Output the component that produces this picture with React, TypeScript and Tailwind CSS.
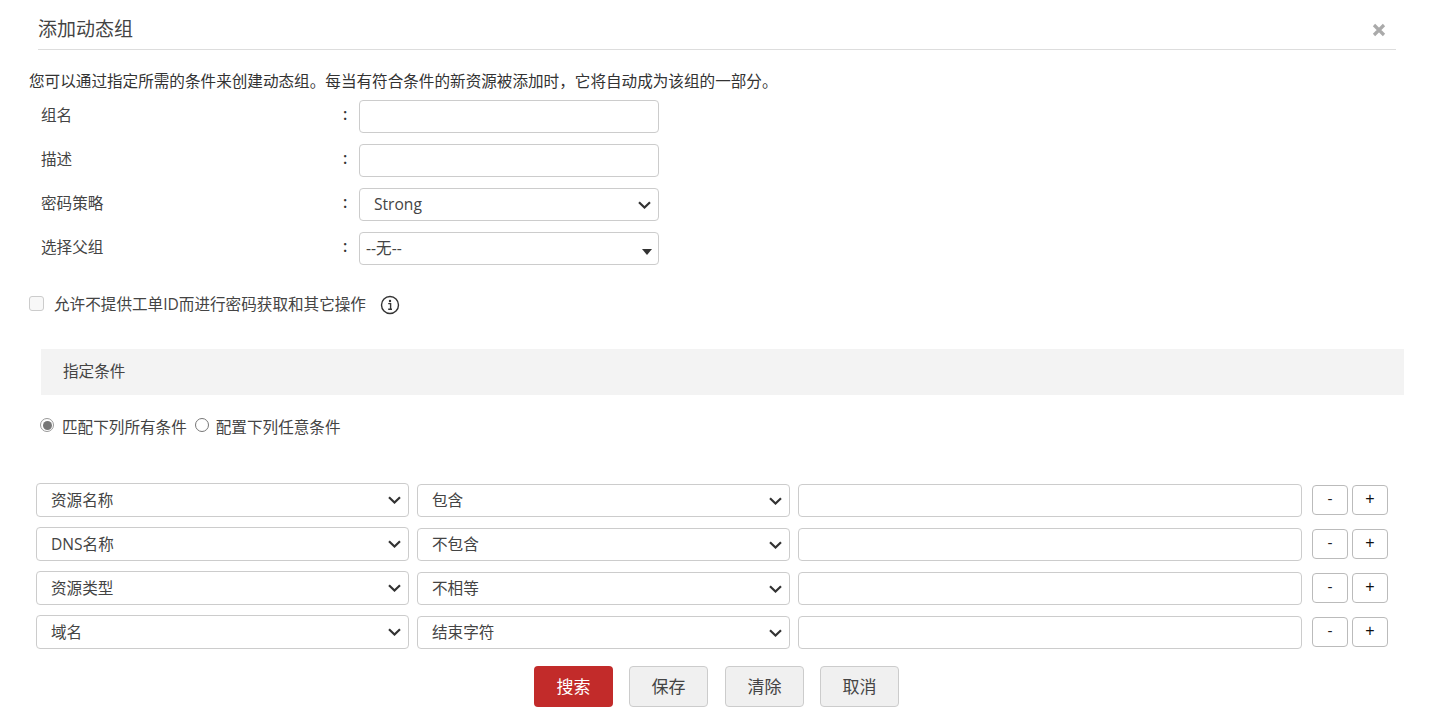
import React from 'react';

const fontStack = "font-['Open_Sans','Noto_Sans_CJK_SC',sans-serif]";

const Chevron: React.FC = () => (
  <svg className="pointer-events-none absolute right-[8px] top-1/2 -translate-y-1/2" width="13" height="8" viewBox="0 0 13 8" fill="none">
    <path d="M1 1.2 L6.5 6.5 L12 1.2" stroke="#333" strokeWidth="2.2" />
  </svg>
);

const SelectBox: React.FC<{ value: string; className: string; selectClass?: string }> = ({ value, className, selectClass }) => (
  <div className={`relative ${className}`}>
    <select
      defaultValue={value}
      className={`h-full w-full appearance-none rounded-[4px] border border-[#ccc] bg-white pl-[14px] pr-8 text-[15.6px] text-[#444] outline-none ${selectClass ?? ''}`}
    >
      <option>{value}</option>
    </select>
    <Chevron />
  </div>
);

const FormRow: React.FC<{ label: string; children: React.ReactNode }> = ({ label, children }) => (
  <div className="flex h-[33px] items-center text-[15.6px] text-[#444]">
    <span className="w-[302px] -translate-y-px">{label}</span>
    <span className="w-[16px] -translate-y-[2px] font-semibold text-[#333]">:</span>
    {children}
  </div>
);

const conditions = [
  { field: '资源名称', op: '包含' },
  { field: 'DNS名称', op: '不包含' },
  { field: '资源类型', op: '不相等' },
  { field: '域名', op: '结束字符' },
];

const App: React.FC = () => {
  return (
    <div className={`h-[726px] w-[1435px] overflow-hidden bg-white ${fontStack}`}>
      <div className="ml-[38px] mr-[39px] flex h-[50px] items-center justify-between border-b border-[#ddd] pt-[10px]">
        <h4 className="text-[19px] font-normal text-[#444]">添加动态组</h4>
        <svg className="mr-[10px]" width="14" height="14" viewBox="0 0 14 14">
          <path d="M2 2 L12 12 M12 2 L2 12" stroke="#aaa" strokeWidth="3.2" />
        </svg>
      </div>

      <p className="ml-[29px] mt-[21px] h-5 text-[15.6px] leading-5 text-[#333]">
        您可以通过指定所需的条件来创建动态组。每当有符合条件的新资源被添加时，它将自动成为该组的一部分。
      </p>

      <div className="ml-[41px] mt-[9px] flex flex-col gap-[11px]">
        <FormRow label="组名">
          <input className="h-[33px] w-[300px] rounded-[4px] border border-[#ccc] outline-none" />
        </FormRow>
        <FormRow label="描述">
          <input className="h-[33px] w-[300px] rounded-[4px] border border-[#ccc] outline-none" />
        </FormRow>
        <FormRow label="密码策略">
          <SelectBox value="Strong" className="h-[33px] w-[300px]" />
        </FormRow>
        <FormRow label="选择父组">
          <div className="relative flex h-[33px] w-[300px] items-center rounded-[4px] border border-[#ccc] pl-[6px] text-[15.6px] text-[#444]">
            --无--
            <span className="absolute right-[6px] top-[16px] h-0 w-0 border-x-[5px] border-t-[6px] border-x-transparent border-t-[#333]" />
          </div>
        </FormRow>
      </div>

      <div className="ml-[29px] mt-[29px] flex h-5 items-center text-[15.6px] text-[#444]">
        <span className="h-[15px] w-[15px] -translate-y-px rounded-[3px] border border-[#ccc] bg-[#f8f8f8]" />
        <span className="ml-[10px] translate-y-px">允许不提供工单ID而进行密码获取和其它操作</span>
        <svg className="ml-[14px] translate-y-px" width="20" height="20" viewBox="0 0 20 20" fill="none">
          <circle cx="10" cy="10" r="8.5" stroke="#333" strokeWidth="1.4" />
          <circle cx="10" cy="6" r="1.2" fill="#333" />
          <path d="M8.2 8.6 H10.6 V14 M8.2 14.2 H12" stroke="#333" strokeWidth="1.4" />
        </svg>
      </div>

      <div className="ml-[41px] mr-[31px] mt-[35px] flex h-[46px] items-center bg-[#f3f3f3] pb-px pl-[22px] text-[15.6px] text-[#444]">
        指定条件
      </div>

      <div className="ml-[40px] mt-[22px] flex h-5 items-center text-[15.6px] text-[#444]">
        <span className="flex h-[14px] w-[14px] -translate-y-[2px] items-center justify-center rounded-full border border-[#999]">
          <span className="h-[9px] w-[9px] rounded-full bg-[#777]" />
        </span>
        <span className="ml-[8px] translate-y-px">匹配下列所有条件</span>
        <span className="ml-[8px] h-[14px] w-[14px] -translate-y-[2px] rounded-full border border-[#777]" />
        <span className="ml-[7px] translate-y-px">配置下列任意条件</span>
      </div>

      <div className="ml-[36px] mt-[46px] flex flex-col gap-[10px]">
        {conditions.map((row) => (
          <div key={row.field} className="flex h-[34px] items-start">
            <SelectBox value={row.field} className="h-[34px] w-[373px]" selectClass="pt-[2px]" />
            <SelectBox value={row.op} className="ml-[8px] mt-px h-[33px] w-[373px]" />
            <input className="ml-[8px] mt-px h-[33px] w-[504px] rounded-[4px] border border-[#ccc] outline-none" />
            <button className="ml-[10px] mt-[2px] h-[30px] w-[36px] rounded-[4px] border border-[#bbb] bg-white pb-px font-['Liberation_Sans',sans-serif] text-[15px] text-[#222]">-</button>
            <button className="ml-[4px] mt-[2px] h-[30px] w-[36px] rounded-[4px] border border-[#bbb] bg-white pb-[3px] font-['Liberation_Sans',sans-serif] text-[16px] text-[#111]">+</button>
          </div>
        ))}
      </div>

      <div className="ml-[534px] mt-[17px] flex items-center">
        <button className="h-[41px] w-[79px] rounded-[4px] bg-[#c22b2a] text-[17px] text-white">搜索</button>
        <button className="ml-[16px] h-[41px] w-[79px] rounded-[4px] border border-[#ccc] bg-[#f0f0f0] text-[17px] text-[#444]">保存</button>
        <button className="ml-[17px] h-[41px] w-[79px] rounded-[4px] border border-[#ccc] bg-[#f0f0f0] text-[17px] text-[#444]">清除</button>
        <button className="ml-[16px] h-[41px] w-[79px] rounded-[4px] border border-[#ccc] bg-[#f0f0f0] text-[17px] text-[#444]">取消</button>
      </div>
    </div>
  );
};

export default App;
